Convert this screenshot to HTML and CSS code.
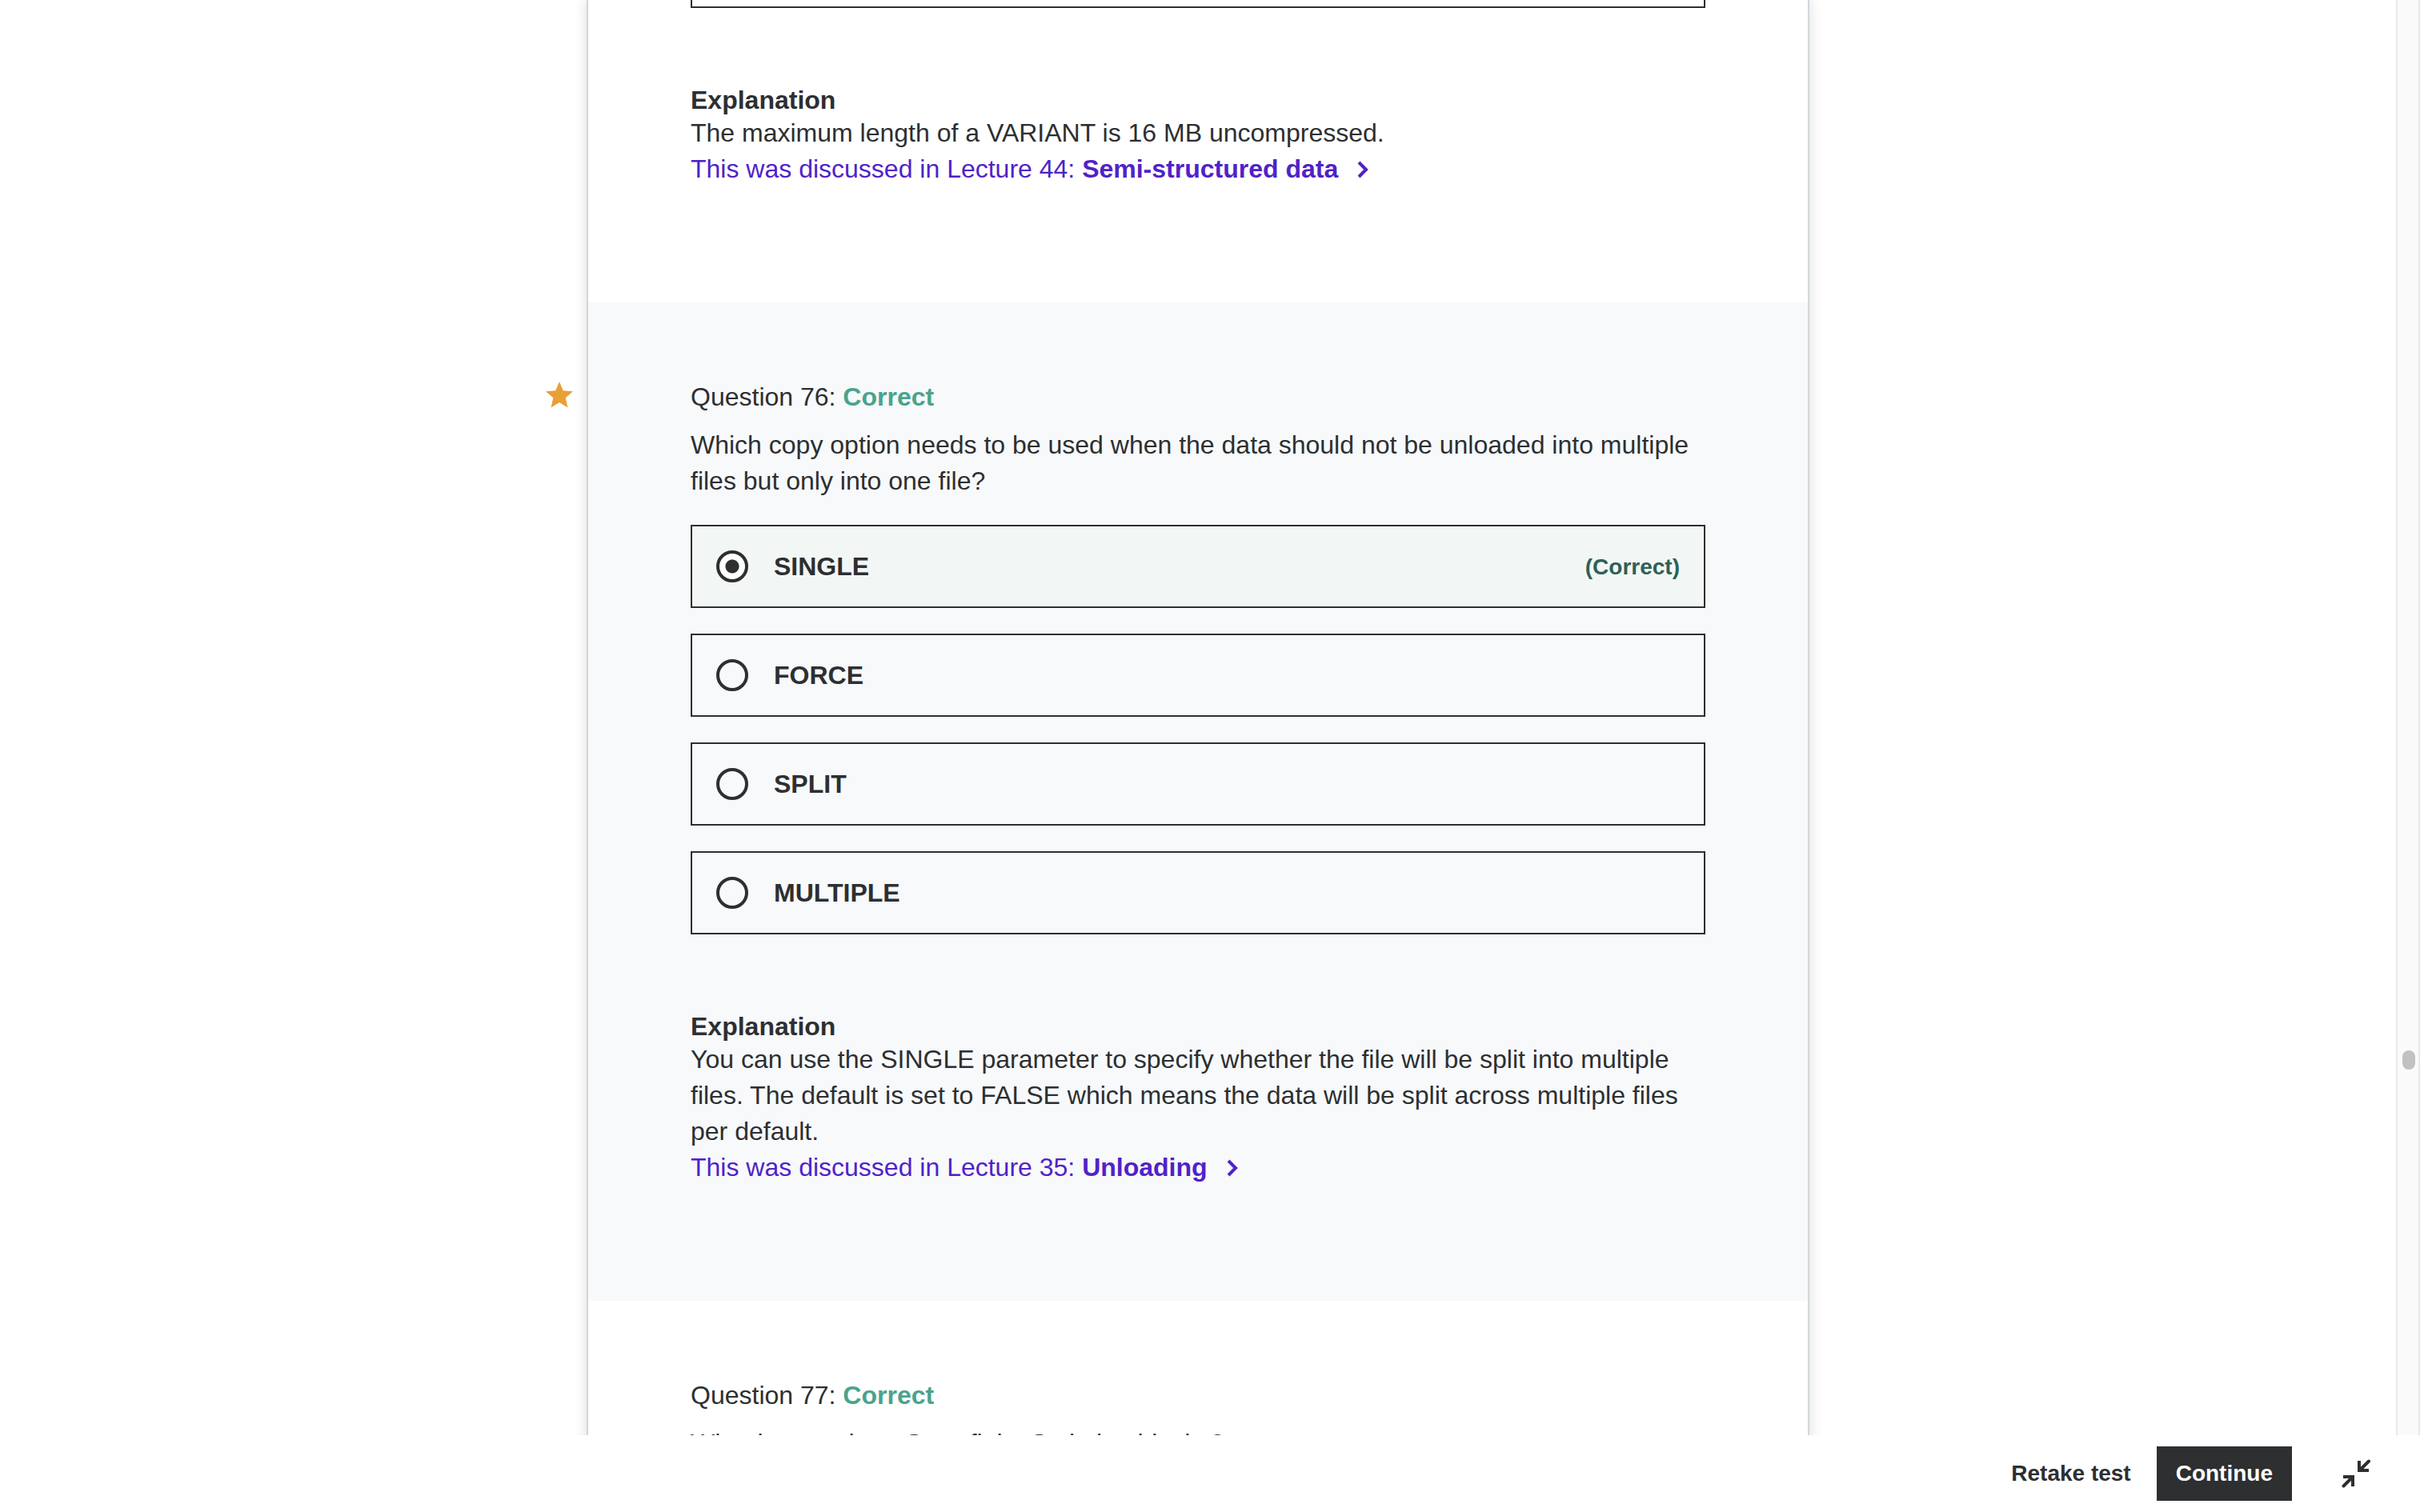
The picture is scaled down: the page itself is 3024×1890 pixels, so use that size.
FILE: index.html
```
<!DOCTYPE html>
<html lang="en">
<head>
  <meta charset="utf-8">
  <meta name="viewport" content="width=device-width, initial-scale=1">
  <title>Practice test review</title>
  <link rel="stylesheet" href="styles.css">
</head>
<body>
  <div class="viewer">
    <main class="results">
      <div class="sheet">
        <section class="question">
          <div class="option-tail"></div>
          <div class="explanation">
            <h3 class="explanation-title">Explanation</h3>
            <p class="text">The maximum length of a VARIANT is 16 MB uncompressed.</p>
            <a class="lecture-link" href="#lecture-44">
              <span>This was discussed in Lecture 44: <strong>Semi-structured data</strong></span>
              <svg class="chevron" viewBox="0 0 14 22" aria-hidden="true"><path d="M2 2L11 11L2 20"/></svg>
            </a>
          </div>
        </section>

        <section class="question question-shaded">
          <svg class="star" viewBox="0 0 34 33" aria-label="Marked for review" role="img"><path d="M17 0L21.700 11.200L34 12.300L24.700 20.300L27.500 32.500L17 26L6.500 32.500L9.300 20.300L0 12.300L12.300 11.200Z"/></svg>
          <h2 class="question-title">Question 76: <strong class="status">Correct</strong></h2>
          <p class="text" id="q76">Which copy option needs to be used when the data should not be unloaded into multiple files but only into one file?</p>
          <div class="options" role="radiogroup" aria-labelledby="q76">
            <label class="option option-correct">
              <input class="radio" type="radio" name="q76" checked>
              <span class="option-text">SINGLE</span>
              <span class="option-verdict">(Correct)</span>
            </label>
            <label class="option">
              <input class="radio" type="radio" name="q76">
              <span class="option-text">FORCE</span>
            </label>
            <label class="option">
              <input class="radio" type="radio" name="q76">
              <span class="option-text">SPLIT</span>
            </label>
            <label class="option">
              <input class="radio" type="radio" name="q76">
              <span class="option-text">MULTIPLE</span>
            </label>
          </div>
          <div class="explanation">
            <h3 class="explanation-title">Explanation</h3>
            <p class="text">You can use the SINGLE parameter to specify whether the file will be split into multiple files. The default is set to FALSE which means the data will be split across multiple files per default.</p>
            <a class="lecture-link" href="#lecture-35">
              <span>This was discussed in Lecture 35: <strong>Unloading</strong></span>
              <svg class="chevron" viewBox="0 0 14 22" aria-hidden="true"><path d="M2 2L11 11L2 20"/></svg>
            </a>
          </div>
        </section>

        <section class="question">
          <h2 class="question-title">Question 77: <strong class="status">Correct</strong></h2>
          <p class="text">What is true about Snowflake Scripting blocks?</p>
        </section>
      </div>
    </main>
    <div class="scrollbar" aria-hidden="true"><div class="scrollbar-thumb"></div></div>
  </div>

  <footer class="toolbar">
    <button class="button button-plain" type="button">Retake test</button>
    <button class="button button-dark" type="button">Continue</button>
    <button class="icon-button" type="button" aria-label="Exit expanded view">
      <svg class="collapse" viewBox="0 0 36 36" aria-hidden="true">
        <path d="M22 2V14H34M2 22H14V34"/>
        <path class="collapse-shaft" d="M34 2.500L23 13.500M2.500 33.500L13 23"/>
      </svg>
    </button>
  </footer>
</body>
</html>
```
FILE: styles.css
```
* {
  box-sizing: border-box;
}

body {
  margin: 0;
  height: 100vh;
  display: flex;
  flex-direction: column;
  background: #fff;
  color: #2d2f31;
  font-family: "Liberation Sans", Arial, sans-serif;
  font-size: 32px;
  line-height: 45px;
}

h2, h3, p {
  margin: 0;
  font-size: inherit;
}

/* Scrolling area */
.viewer {
  flex: 1;
  min-height: 0;
  display: flex;
}

.results {
  flex: 1;
  min-width: 0;
  overflow: hidden;
}

.sheet {
  max-width: 1528px;
  margin: 0 auto;
  border: solid #d1d7dc;
  border-width: 0 2px;
  box-shadow: 0 0 16px rgba(0, 0, 0, 0.14);
}

.scrollbar {
  width: 30px;
  padding-left: 6px;
  border: solid #e8e8e8;
  border-width: 0 2px;
  background: #fafafa;
}

.scrollbar-thumb {
  width: 16px;
  height: 24px;
  margin-top: 1313px;
  border-radius: 8px;
  background: #c1c1c1;
}

/* Questions */
.question {
  position: relative;
  padding: 96px 128px 144px;
  background: #fff;
}

.question:first-child {
  padding-top: 0;
}

.question-shaded {
  background: #f7f9fb;
}

.star {
  position: absolute;
  top: 99px;
  left: -53px;
  width: 34px;
  height: 33px;
  fill: #e89f37;
}

.question-title {
  margin-bottom: 16px;
  font-weight: 400;
  line-height: 44px;
}

.status {
  color: #4ba38c;
}

/* Answers */
.options {
  display: flex;
  flex-direction: column;
  gap: 32px;
  margin-top: 32px;
}

.option {
  display: flex;
  align-items: center;
  gap: 32px;
  height: 104px;
  padding: 0 30px;
  border: 2px solid #2d2f31;
  font-weight: 700;
}

.option-correct {
  background: #f2f7f6;
}

.option-text {
  flex: 1;
}

.option-verdict {
  color: #2f6055;
  font-size: 28px;
}

.option-tail {
  height: 10px;
  border: 2px solid #2d2f31;
  border-top: 0;
}

.radio {
  appearance: none;
  width: 40px;
  height: 40px;
  margin: 0;
  border: 4px solid #2d2f31;
  border-radius: 50%;
}

.radio:checked {
  background: radial-gradient(circle, #2d2f31 8px, #fff 9px);
}

/* Explanations */
.explanation {
  margin-top: 96px;
}

.explanation-title {
  font-weight: 700;
  line-height: 38px;
}

.lecture-link {
  display: flex;
  align-items: center;
  gap: 24px;
  color: #5022c8;
  text-decoration: none;
}

.chevron {
  width: 14px;
  height: 22px;
  fill: none;
  stroke: currentColor;
  stroke-width: 4;
}

/* Bottom toolbar */
.toolbar {
  display: flex;
  align-items: center;
  justify-content: flex-end;
  height: 96px;
  padding-right: 48px;
  background: #fff;
}

.button {
  height: 68px;
  border: 0;
  font: 700 28px/34px "Liberation Sans", Arial, sans-serif;
}

.button-plain {
  padding: 0 32px;
  background: none;
  color: #2d2f31;
}

.button-dark {
  padding: 0 24px;
  background: #2d2f31;
  color: #fff;
}

.icon-button {
  display: flex;
  justify-content: center;
  width: 64px;
  margin-left: 48px;
  padding: 0;
  border: 0;
  background: none;
  color: #2d2f31;
}

.collapse {
  width: 36px;
  height: 36px;
  fill: none;
  stroke: currentColor;
  stroke-width: 4;
}

.collapse-shaft {
  stroke-linecap: round;
}
```
